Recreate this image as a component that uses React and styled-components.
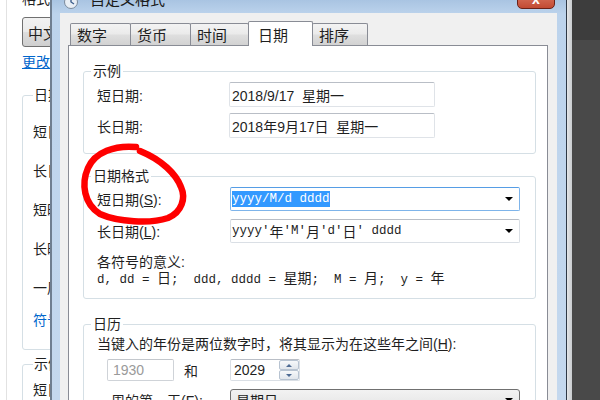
import styled, { createGlobalStyle } from "styled-components";

const GlobalStyle = createGlobalStyle`
  html, body { margin: 0; padding: 0; background: #474747; }
`;

const UI_FONT = `"Liberation Sans", "Noto Sans CJK SC", sans-serif`;
const MONO_FONT = `"Liberation Mono", "Noto Sans CJK SC", monospace`;

const Screen = styled.div`
  position: relative;
  width: 600px;
  height: 400px;
  overflow: hidden;
  display: flex;
  font-family: ${UI_FONT};
  font-size: 14px;
  color: #1f1f1f;
  background: linear-gradient(#3d3d3d 0, #3d3d3d 40px, #494949 40px);
`;

/* window behind the dialog */
const BackWindow = styled.div`
  flex: none;
  width: 50px;
  overflow: hidden;
  background: linear-gradient(to right, #fff 6px, #e2e2e2 6px, #e2e2e2 7px, #fff 7px);
  padding-left: 22px;
  box-sizing: border-box;
`;

const BackInner = styled.div`
  width: 300px;
  display: flex;
  flex-direction: column;
  align-items: flex-start;
`;

const BackCaption = styled.div`
  margin-top: -10px;
  line-height: 18px;
`;

const BackCombo = styled.div`
  margin-top: 9px;
  width: 140px;
  height: 30px;
  box-sizing: border-box;
  border: 1px solid #707070;
  border-radius: 3px;
  background: linear-gradient(#f2f2f2, #ebebeb 48%, #dddddd 52%, #cfcfcf);
  display: flex;
  align-items: center;
  padding-left: 5px;
  font-size: 15px;
`;

const BackLink = styled.div`
  margin-top: 7px;
  line-height: 16px;
  color: #0066cc;
  text-decoration: underline;
`;

const BackGroup = styled.fieldset`
  margin: ${(p) => p.$top}px 0 0 0;
  width: 300px;
  box-sizing: border-box;
  border: 1px solid #d5dfe5;
  border-radius: 3px;
  padding: 0 0 20px 10px;
  display: flex;
  flex-direction: column;
  align-items: flex-start;
`;

const BackLegend = styled.legend`
  padding: 0 1px;
  line-height: 18px;
`;

const BackItem = styled.div`
  line-height: 18px;
  margin-top: ${(p) => p.$top}px;
  white-space: nowrap;
  color: ${(p) => (p.$link ? "#0066cc" : "#1f1f1f")};
`;

/* dialog */
const Dialog = styled.div`
  flex: none;
  width: 517px;
  box-sizing: border-box;
  display: flex;
  flex-direction: column;
  border-left: 2px solid #6f7e90;
  border-right: 1px solid #2e3845;
  padding: 0 9px 0 8px;
  background: linear-gradient(#a9c4e2 0, #bcd3ec 14px, #c4d8ee 100%);
`;

const EdgeStrip = styled.div`
  flex: none;
  width: 5px;
  background: linear-gradient(to right, #e4e6e8, #c9cccf);
`;

const TitleBar = styled.div`
  height: 13px;
  flex: none;
  overflow: hidden;
  display: flex;
  align-items: flex-start;
  padding-left: 3px;
`;

const TitleIcon = styled.svg`
  margin-top: -6px;
  flex: none;
`;

const TitleText = styled.div`
  margin: -10px 0 0 11px;
  line-height: 20px;
  font-size: 15px;
  color: #1a1a1a;
`;

const CloseButton = styled.div`
  margin: -11px 2px 0 auto;
  width: 38px;
  height: 20px;
  box-sizing: border-box;
  border: 1px solid #6b2219;
  border-radius: 0 0 5px 5px;
  background: linear-gradient(#e8a090, #d0634d 55%, #c24a33);
  color: #fff;
  font-weight: bold;
  font-size: 14px;
  line-height: 18px;
  text-align: center;
`;

const Content = styled.div`
  flex: 1;
  display: flex;
  flex-direction: column;
  background: #f0f0f0;
  padding: 8px 9px 0 8px;
`;

const TabRow = styled.div`
  display: flex;
  align-items: flex-end;
  height: 24px;
  padding-left: 2px;
  position: relative;
  z-index: 1;
`;

const Tab = styled.div`
  box-sizing: border-box;
  width: ${(p) => p.$w}px;
  height: ${(p) => (p.$active ? 25 : 22)}px;
  margin-left: -1px;
  margin-bottom: ${(p) => (p.$active ? -1 : 0)}px;
  padding-left: ${(p) => (p.$active ? 9 : 6)}px;
  border: 1px solid #898c95;
  border-bottom: none;
  border-radius: 2px 2px 0 0;
  background: ${(p) =>
    p.$active
      ? "#fff"
      : "linear-gradient(#f3f3f3, #ebebeb 45%, #dedede 55%, #d2d2d2)"};
  display: flex;
  align-items: center;
  font-size: 15px;
  position: relative;
  z-index: ${(p) => (p.$active ? 2 : 1)};
  &:first-child {
    margin-left: 0;
  }
`;

const Panel = styled.div`
  flex: 1;
  background: #fff;
  border: 1px solid #898c95;
  padding: 15px 11px 0 14px;
  display: flex;
  flex-direction: column;
`;

const Group = styled.fieldset`
  margin: ${(p) => p.$top || 0}px 0 0 0;
  min-width: 0;
  border: 1px solid #d5dfe5;
  border-radius: 3px;
  padding: 0 10px ${(p) => p.$bottom}px 10px;
  display: flex;
  flex-direction: column;
`;

const Legend = styled.legend`
  padding: 0 2px;
  margin-left: -3px;
  line-height: 20px;
`;

const Row = styled.div`
  display: grid;
  grid-template-columns: ${(p) => p.$label}px auto;
  align-items: center;
  margin-top: ${(p) => p.$top}px;
`;

const Label = styled.div`
  padding-left: 3px;
  white-space: nowrap;
`;

const TextBox = styled.div`
  box-sizing: border-box;
  width: 206px;
  height: 25px;
  border: 1px solid #dfe3e8;
  border-top-color: #b9bec6;
  border-radius: 2px;
  padding-left: 2px;
  display: flex;
  align-items: center;
  white-space: pre;
`;

const Combo = styled.div`
  box-sizing: border-box;
  width: 290px;
  height: 24px;
  border: 1px solid ${(p) => (p.$focus ? "#7eb4ea" : "#dadfe5")};
  border-top-color: ${(p) => (p.$focus ? "#569de5" : "#b9bec6")};
  border-radius: 2px;
  padding-left: 1px;
  display: flex;
  align-items: center;
  font-family: ${MONO_FONT};
  font-size: 12.5px;
  white-space: pre;
`;

const Selected = styled.span`
  background: #3399ff;
  color: #fff;
  line-height: 16px;
`;

const Arrow = styled.span`
  margin: 0 6px 0 auto;
  width: 0;
  height: 0;
  border-left: 4px solid transparent;
  border-right: 4px solid transparent;
  border-top: 4px solid #000;
`;

const Cjk = styled.span`
  font-family: "Noto Sans CJK SC", sans-serif;
  font-size: 14px;
`;

const Meaning = styled.div`
  padding-left: 3px;
  line-height: 15px;
  margin-top: ${(p) => p.$top || 0}px;
  white-space: pre;
  font-family: ${(p) => (p.$mono ? MONO_FONT : UI_FONT)};
  font-size: ${(p) => (p.$mono ? 12.5 : 14)}px;
`;

const Para = styled.div`
  padding-left: 3px;
  margin-top: 2px;
  line-height: 16px;
  white-space: nowrap;
`;

const YearRow = styled.div`
  display: flex;
  align-items: center;
  padding-left: 13px;
  margin-top: 7px;
`;

const YearBox = styled.div`
  box-sizing: border-box;
  width: ${(p) => p.$w}px;
  height: 22px;
  margin-left: ${(p) => p.$left || 0}px;
  border: 1px solid ${(p) => (p.$disabled ? "#cfd3d8" : "#dadfe5")};
  border-top-color: ${(p) => (p.$disabled ? "#c3c7cc" : "#b9bec6")};
  border-radius: 2px;
  display: flex;
  align-items: center;
  padding-left: ${(p) => (p.$disabled ? 5 : 3)}px;
  color: ${(p) => (p.$disabled ? "#9a9a9a" : "#1f1f1f")};
`;

const And = styled.span`
  margin-left: 10px;
`;

const Spinner = styled.div`
  margin-left: auto;
  width: 20px;
  height: 20px;
  display: flex;
  flex-direction: column;
`;

const SpinHalf = styled.div`
  flex: 1;
  box-sizing: border-box;
  border: 1px solid #b7c3d1;
  border-radius: 2px;
  background: linear-gradient(#f6f8fa, #e1e6ec);
  display: flex;
  align-items: center;
  justify-content: center;
  &::after {
    content: "";
    border-left: 3px solid transparent;
    border-right: 3px solid transparent;
    ${(p) => (p.$up ? "border-bottom" : "border-top")}: 3px solid #4d6a93;
  }
`;

const DropButton = styled.div`
  box-sizing: border-box;
  width: 290px;
  height: 22px;
  border: 1px solid #707070;
  border-radius: 3px;
  background: linear-gradient(#f2f2f2, #ebebeb 48%, #dddddd 52%, #cfcfcf);
  display: flex;
  align-items: center;
  padding-left: 5px;
`;

const Annotation = styled.svg`
  position: absolute;
  left: 0;
  top: 0;
  pointer-events: none;
`;

const tabs = [
  { label: "数字", w: 61 },
  { label: "货币", w: 61 },
  { label: "时间", w: 59 },
  { label: "日期", w: 65, active: true },
  { label: "排序", w: 56 },
];

export default function App() {
  return (
    <Screen>
      <GlobalStyle />
      <BackWindow>
        <BackInner>
          <BackCaption>格式</BackCaption>
          <BackCombo>中文(简体，中国)</BackCombo>
          <BackLink>更改排序方法</BackLink>
          <BackGroup $top={16}>
            <BackLegend>日期和时间格式</BackLegend>
            <BackItem $top={19}>短日期(N):</BackItem>
            <BackItem $top={21}>长日期(L):</BackItem>
            <BackItem $top={21}>短时间(H):</BackItem>
            <BackItem $top={21}>长时间(O):</BackItem>
            <BackItem $top={21}>一周的第一天(W):</BackItem>
            <BackItem $top={14} $link>符号的意义是什么?</BackItem>
          </BackGroup>
          <BackGroup $top={5}>
            <BackLegend>示例</BackLegend>
            <BackItem $top={8}>短日期:</BackItem>
          </BackGroup>
        </BackInner>
      </BackWindow>

      <Dialog>
        <TitleBar>
          <TitleIcon width="16" height="16" viewBox="0 0 16 16">
            <circle cx="8" cy="8" r="6.5" fill="#e8eef5" stroke="#7b8a9c" />
            <path d="M8 4v4l3 2" stroke="#3d5e8c" strokeWidth="1.4" fill="none" />
          </TitleIcon>
          <TitleText>自定义格式</TitleText>
          <CloseButton>x</CloseButton>
        </TitleBar>
        <Content>
          <TabRow>
            {tabs.map((t) => (
              <Tab key={t.label} $w={t.w} $active={t.active}>
                {t.label}
              </Tab>
            ))}
          </TabRow>
          <Panel>
            <Group $bottom={15}>
              <Legend>示例</Legend>
              <Row $label={135} $top={1}>
                <Label>短日期:</Label>
                <TextBox>{"2018/9/17  星期一"}</TextBox>
              </Row>
              <Row $label={135} $top={6}>
                <Label>长日期:</Label>
                <TextBox>{"2018年9月17日  星期一"}</TextBox>
              </Row>
            </Group>

            <Group $top={12} $bottom={10}>
              <Legend>日期格式</Legend>
              <Row $label={136} $top={1}>
                <Label>
                  短日期(<u>S</u>):
                </Label>
                <Combo $focus>
                  <Selected>yyyy/M/d dddd</Selected>
                  <Arrow />
                </Combo>
              </Row>
              <Row $label={136} $top={8}>
                <Label>
                  长日期(<u>L</u>):
                </Label>
                <Combo>
                  yyyy'<Cjk>年</Cjk>'M'<Cjk>月</Cjk>'d'<Cjk>日</Cjk>' dddd
                  <Arrow />
                </Combo>
              </Row>
              <Meaning $top={12}>各符号的意义:</Meaning>
              <Meaning $mono>
                {"d, dd = "}
                <Cjk>日</Cjk>
                {";  ddd, dddd = "}
                <Cjk>星期</Cjk>
                {";  M = "}
                <Cjk>月</Cjk>
                {";  y = "}
                <Cjk>年</Cjk>
              </Meaning>
            </Group>

            <Group $top={15} $bottom={10}>
              <Legend>日历</Legend>
              <Para>
                当键入的年份是两位数字时，将其显示为在这些年之间(<u>H</u>):
              </Para>
              <YearRow>
                <YearBox $w={67} $disabled>
                  1930
                </YearBox>
                <And>和</And>
                <YearBox $w={70} $left={32}>
                  2029
                  <Spinner>
                    <SpinHalf $up />
                    <SpinHalf />
                  </Spinner>
                </YearBox>
              </YearRow>
              <Row $label={136} $top={8}>
                <Label>
                  一周的第一天(<u>F</u>):
                </Label>
                <DropButton>
                  星期日
                  <Arrow />
                </DropButton>
              </Row>
            </Group>
          </Panel>
        </Content>
      </Dialog>
      <EdgeStrip />

      <Annotation width="600" height="400" viewBox="0 0 600 400">
        <path
          d="M136 147 C115 145, 95 152, 88 168 C81 184, 84 204, 100 214 C118 222, 150 224, 168 218 C182 212, 186 198, 181 187 C176 174, 162 160, 140 151"
          fill="none"
          stroke="#ff0000"
          strokeWidth="6.5"
          strokeLinecap="round"
        />
      </Annotation>
    </Screen>
  );
}
